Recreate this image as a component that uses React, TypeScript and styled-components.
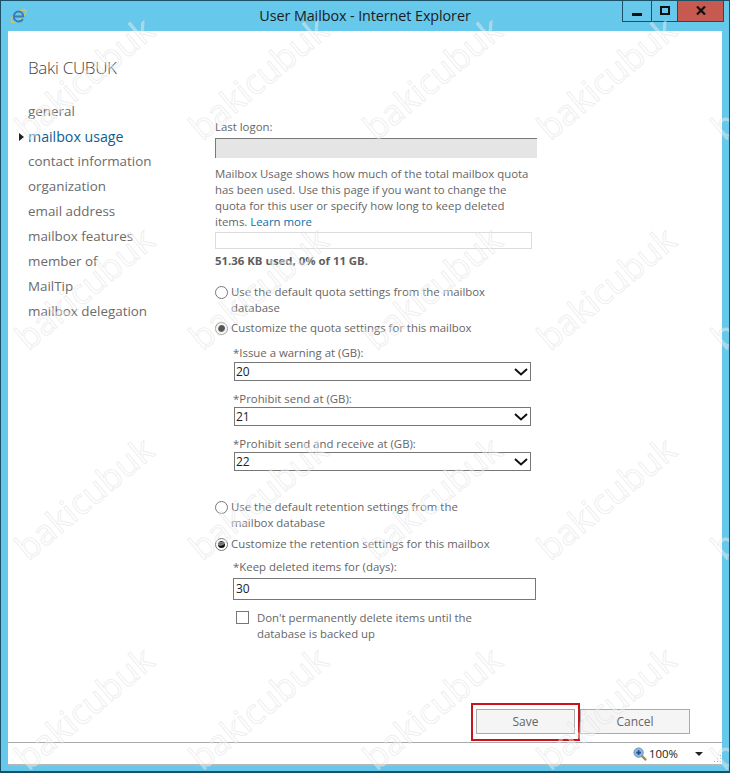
import React from "react";
import styled, { createGlobalStyle } from "styled-components";

const Global = createGlobalStyle`
  html, body { margin: 0; padding: 0; background: #fff; }
  * { box-sizing: border-box; }
  #root { width: 730px; height: 773px; overflow: hidden; }
`;

const FONT = `"Open Sans", "Noto Sans", "Liberation Sans", sans-serif`;

const Frame = styled.div`
  position: relative;
  width: 730px;
  height: 773px;
  overflow: hidden;
  display: flex;
  flex-direction: column;
  background: #66c8ea;
  border: 1px solid #1b5167;
  border-bottom-width: 2px;
  font-family: ${FONT};
  color: #666;
`;

const TitleBar = styled.div`
  position: relative;
  height: 30px;
  flex: none;
  display: flex;
  align-items: center;
  justify-content: center;
  padding-bottom: 1px;
`;

const TitleText = styled.div`
  font-size: 14.4px;
  color: #1c1c1c;
  letter-spacing: -0.1px;
`;

const AppIcon = styled.svg`
  position: absolute;
  left: 8px;
  top: 5px;
`;

const WindowControls = styled.div`
  position: absolute;
  right: 5px;
  top: -1px;
  height: 22px;
  display: flex;
  border: 1px solid #1b5167;
  border-top: 0;
`;

const WindowButton = styled.div<{ $w: number; $bg?: string }>`
  width: ${(p) => p.$w}px;
  height: 100%;
  display: flex;
  align-items: center;
  justify-content: center;
  background: ${(p) => p.$bg || "transparent"};
  & + & { border-left: 1px solid #1b5167; }
`;

const Client = styled.div`
  flex: 1;
  margin: 0 7px;
  display: flex;
  flex-direction: column;
  background: #fff;
  min-height: 0;
`;

const Body = styled.div`
  flex: 1;
  display: flex;
  min-height: 0;
`;

const Sidebar = styled.aside`
  width: 207px;
  flex: none;
  padding: 25px 0 0 20px;
`;

const UserName = styled.div`
  font-size: 17px;
  font-weight: 300;
  line-height: 24px;
  color: #444;
  letter-spacing: -0.3px;
`;

const Nav = styled.nav`
  margin-top: 19px;
`;

const NavItem = styled.div<{ $active?: boolean }>`
  position: relative;
  height: 25px;
  line-height: 25px;
  font-size: ${(p) => (p.$active ? "14.2px" : "13.4px")};
  color: ${(p) => (p.$active ? "#0b5f93" : "#6b6b6b")};
`;

const NavMarker = styled.span`
  position: absolute;
  left: -9px;
  top: 9px;
  width: 0;
  height: 0;
  border-left: 5px solid #222;
  border-top: 4px solid transparent;
  border-bottom: 4px solid transparent;
`;

const Form = styled.main`
  flex: 1;
  padding-top: 88px;
  font-size: 11.4px;
  line-height: 16px;
  color: #666;
`;

const Label = styled.div<{ $top?: number; $indent?: number }>`
  margin-top: ${(p) => p.$top || 0}px;
  margin-left: ${(p) => p.$indent || 0}px;
  height: 16px;
  white-space: nowrap;
`;

const DisabledInput = styled.div`
  margin-top: 3px;
  width: 322px;
  height: 20px;
  background: #e5e5e5;
  border-top: 1px solid #7a7a7a;
  border-left: 1px solid #7a7a7a;
`;

const Paragraph = styled.p`
  margin: 8px 0 0;
  width: 318px;
`;

const Link = styled.span`
  color: #0a6fa8;
`;

const UsageBar = styled.div`
  margin-top: 2px;
  width: 317px;
  height: 17px;
  border: 1px solid #dcdcdc;
`;

const UsageText = styled.div`
  margin-top: 4px;
  font-weight: 700;
  color: #5e5e5e;
`;

const RadioRow = styled.div<{ $top: number }>`
  margin-top: ${(p) => p.$top}px;
  display: flex;
  width: 290px;
`;

const RadioDot = styled.span<{ $checked?: boolean; $dot?: string }>`
  flex: none;
  width: 13px;
  height: 13px;
  margin: 2px 3px 0 0;
  border-radius: 50%;
  border: 1px solid #777;
  display: flex;
  align-items: center;
  justify-content: center;
  background: #fff;
  &::after {
    content: "";
    display: ${(p) => (p.$checked ? "block" : "none")};
    width: 7px;
    height: 7px;
    border-radius: 50%;
    background: ${(p) => p.$dot || "#111"};
  }
`;

const Combo = styled.div<{ $top?: number }>`
  margin: ${(p) => p.$top || 0}px 0 0 19px;
  width: 297px;
  height: 19px;
  border: 1px solid #777;
  display: flex;
  align-items: center;
  justify-content: space-between;
  padding: 0 2px 0 1px;
  font-size: 12px;
  color: #222;
`;

const NumberInput = styled.div`
  margin: 3px 0 0 18px;
  width: 303px;
  height: 22px;
  border: 1px solid #777;
  padding-left: 2px;
  display: flex;
  align-items: center;
  font-size: 12px;
  color: #222;
`;

const CheckRow = styled.div`
  margin: 10px 0 0 21px;
  display: flex;
  width: 260px;
`;

const CheckBox = styled.span`
  flex: none;
  width: 13px;
  height: 13px;
  margin: 1px 8px 0 0;
  border: 1px solid #777;
  background: #fff;
`;

const Footer = styled.footer`
  position: relative;
  height: 42px;
  flex: none;
  display: flex;
  justify-content: flex-end;
  gap: 5px;
  padding: 9px 32px 0 0;
`;

const Button = styled.div<{ $w: number }>`
  width: ${(p) => p.$w}px;
  height: 25px;
  background: #f5f5f5;
  border: 1px solid #ababab;
  display: flex;
  align-items: center;
  justify-content: center;
  font-size: 12px;
  color: #666;
`;

const Highlight = styled.div`
  position: absolute;
  left: 463px;
  top: 3px;
  width: 109px;
  height: 38px;
  border: 2px solid #c8141e;
`;

const StatusBar = styled.div`
  position: relative;
  height: 24px;
  flex: none;
  border-top: 1px solid #a9a9a9;
  border-bottom: 2px solid #b5b5b5;
  background: #fff;
  display: flex;
  align-items: center;
  padding-left: 625px;
  font-size: 11.4px;
  color: #222;
`;

const ZoomText = styled.span`
  margin-left: 2px;
  width: 46px;
`;

const Caret = styled.span`
  width: 0;
  height: 0;
  border-top: 4px solid #222;
  border-left: 4px solid transparent;
  border-right: 4px solid transparent;
`;

const Grip = styled.svg`
  position: absolute;
  right: 0;
  bottom: 0;
`;

const BottomBand = styled.div`
  height: 5px;
  flex: none;
`;

const Watermark = styled.div<{ $x: number; $y: number }>`
  position: absolute;
  left: ${(p) => p.$x - 1}px;
  top: ${(p) => p.$y - 1}px;
  width: 240px;
  height: 50px;
  margin: -25px 0 0 -120px;
  text-align: center;
  line-height: 50px;
  font-family: "Open Sans", sans-serif;
  font-size: 35px;
  color: rgba(255, 255, 255, 0.4);
  -webkit-text-stroke: 1px rgba(215, 215, 215, 0.42);
  transform: rotate(-40deg);
  pointer-events: none;
  white-space: nowrap;
`;

const NAV = [
  "general",
  "mailbox usage",
  "contact information",
  "organization",
  "email address",
  "mailbox features",
  "member of",
  "MailTip",
  "mailbox delegation",
];

const MARKS: [number, number][] = [];
for (let r = 0; r < 4; r++) {
  for (let c = 0; c < 5; c++) MARKS.push([84 + 174 * c, 78 + 210 * r]);
}

const Chevron = () => (
  <svg width="14" height="8" viewBox="0 0 14 8">
    <path d="M1 1l6 5.5L13 1" fill="none" stroke="#111" strokeWidth="2" />
  </svg>
);

export default function App() {
  return (
    <>
      <Global />
      <Frame>
        <TitleBar>
          <AppIcon width="19" height="19" viewBox="0 0 19 19">
            <ellipse cx="9.5" cy="10" rx="9" ry="3.6" transform="rotate(-38 9.5 10)" fill="none" stroke="#e3c441" strokeWidth="1.3" />
            <path d="M4.8 10.500H14.200C14.200 7.500 12.200 5.500 9.600 5.500 6.900 5.500 4.800 7.700 4.800 10.500 4.800 13.300 6.900 15.500 9.600 15.500 11.500 15.500 13 14.600 13.800 13" fill="none" stroke="#2f7fc4" strokeWidth="2" />
          </AppIcon>
          <TitleText>User Mailbox - Internet Explorer</TitleText>
          <WindowControls>
            <WindowButton $w={28}>
              <svg width="10" height="10" viewBox="0 0 10 10"><rect y="7" width="10" height="3" fill="#111" /></svg>
            </WindowButton>
            <WindowButton $w={26}>
              <svg width="10" height="9" viewBox="0 0 10 9"><rect x="1" y="1" width="8" height="7" fill="none" stroke="#111" strokeWidth="2" /></svg>
            </WindowButton>
            <WindowButton $w={46} $bg="#c75a50">
              <svg width="10" height="9" viewBox="0 0 10 9"><path d="M1 .5l8 8M9 .5l-8 8" stroke="#111" strokeWidth="2.200" /></svg>
            </WindowButton>
          </WindowControls>
        </TitleBar>
        <Client>
          <Body>
            <Sidebar>
              <UserName>Baki CUBUK</UserName>
              <Nav>
                {NAV.map((n) => (
                  <NavItem key={n} $active={n === "mailbox usage"}>
                    {n === "mailbox usage" && <NavMarker />}
                    {n}
                  </NavItem>
                ))}
              </Nav>
            </Sidebar>
            <Form>
              <Label>Last logon:</Label>
              <DisabledInput />
              <Paragraph>
                Mailbox Usage shows how much of the total mailbox quota has been used. Use this page if you want to change the quota for this user or specify how long to keep deleted items. <Link>Learn more</Link>
              </Paragraph>
              <UsageBar />
              <UsageText>51.36 KB used, 0% of 11 GB.</UsageText>
              <RadioRow $top={15}>
                <RadioDot />
                <span>Use the default quota settings from the mailbox database</span>
              </RadioRow>
              <RadioRow $top={4}>
                <RadioDot $checked $dot="#555" />
                <span>Customize the quota settings for this mailbox</span>
              </RadioRow>
              <Label $top={9} $indent={18}>*Issue a warning at (GB):</Label>
              <Combo $top={1}>20<Chevron /></Combo>
              <Label $top={10} $indent={18}>*Prohibit send at (GB):</Label>
              <Combo>21<Chevron /></Combo>
              <Label $top={10} $indent={18}>*Prohibit send and receive at (GB):</Label>
              <Combo>22<Chevron /></Combo>
              <RadioRow $top={28}>
                <RadioDot />
                <span>Use the default retention settings from the<br />mailbox database</span>
              </RadioRow>
              <RadioRow $top={5}>
                <RadioDot $checked />
                <span>Customize the retention settings for this mailbox</span>
              </RadioRow>
              <Label $top={7} $indent={18}>*Keep deleted items for (days):</Label>
              <NumberInput>30</NumberInput>
              <CheckRow>
                <CheckBox />
                <span>Don't permanently delete items until the<br />database is backed up</span>
              </CheckRow>
            </Form>
          </Body>
          <Footer>
            <Button $w={99}>Save</Button>
            <Button $w={110}>Cancel</Button>
            <Highlight />
          </Footer>
          <StatusBar>
            <svg width="14" height="14" viewBox="0 0 15 15">
              <path d="M9 9l5 5" stroke="#a98a52" strokeWidth="2.500" />
              <circle cx="6" cy="6" r="5" fill="#8fb8e0" stroke="#6a8fb5" />
              <path d="M3.500 6h5M6 3.500v5" stroke="#1f4f90" strokeWidth="1.800" />
            </svg>
            <ZoomText>100%</ZoomText>
            <Caret />
            <Grip width="10" height="10" viewBox="0 0 10 10">
              <path d="M8 1h1v1H8zM5 4h1v1H5zM8 4h1v1H8zM2 7h1v1H2zM5 7h1v1H5zM8 7h1v1H8z" fill="#aaa" />
            </Grip>
          </StatusBar>
        </Client>
        <BottomBand />
        {MARKS.map(([x, y]) => (
          <Watermark key={`${x}-${y}`} $x={x} $y={y}>bakicubuk</Watermark>
        ))}
      </Frame>
    </>
  );
}
